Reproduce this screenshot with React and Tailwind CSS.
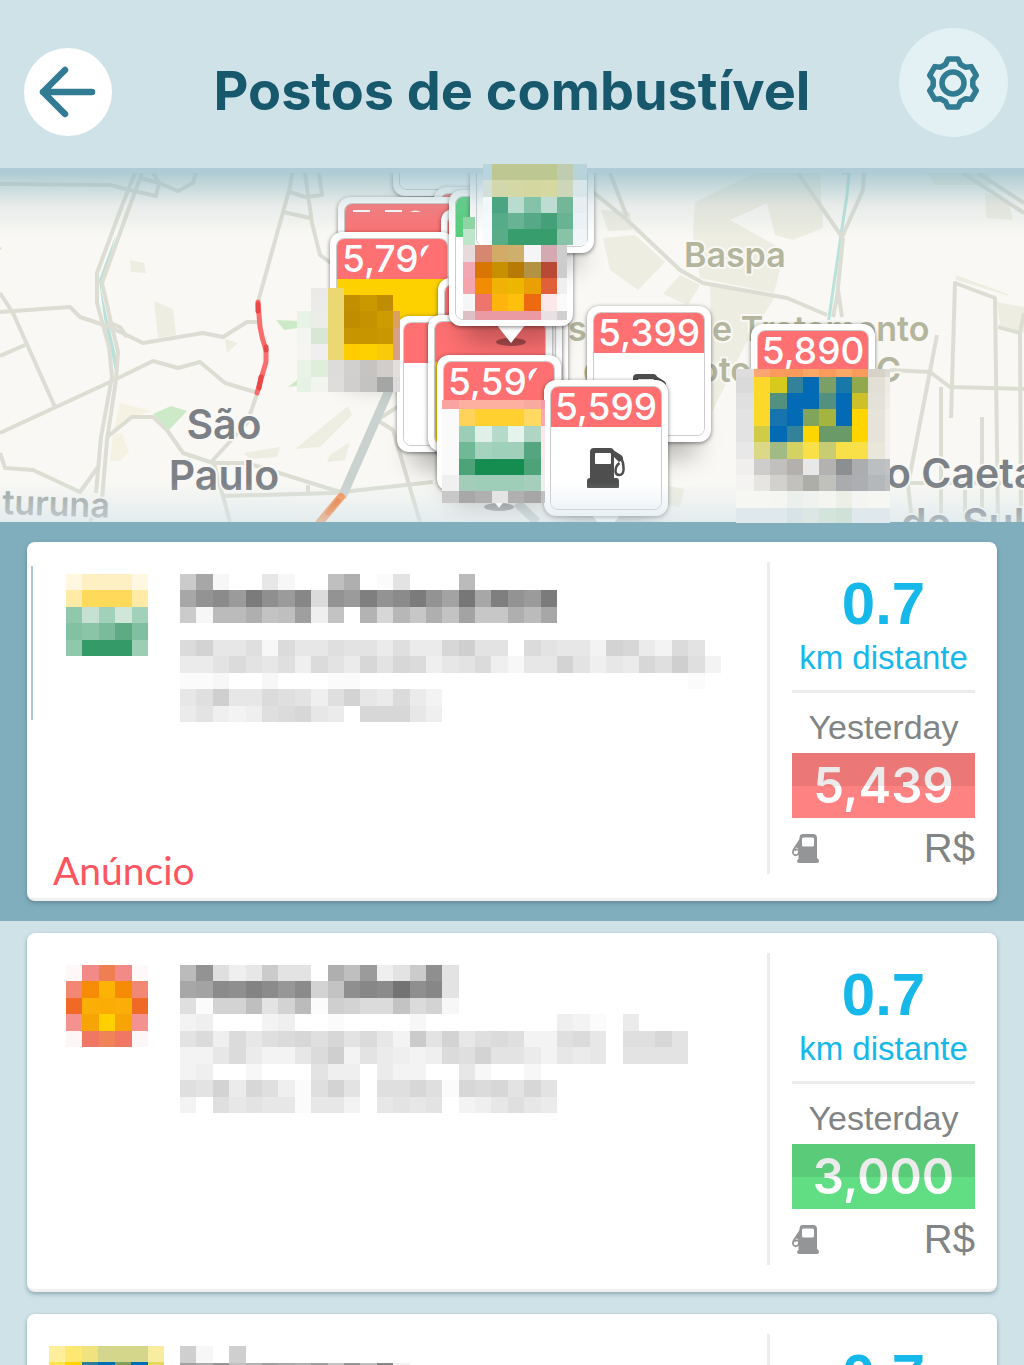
const CELL = 82 / 5;

const stations = [
    {
        id: "first",
        sponsored: true,
        price: "5,439",
        priceClass: "bg-[#ff8282]",
        logo: [
            "fff7df fff0c4 fff0c4 fff0c4 fff7df",
            "ffeaa6 ffd95a ffd95a ffd95a ffeaa6",
            "8fc8ab c6e1d3 a1d1b8 cfe6d9 a1d1b8",
            "82c1a1 8ac5a7 79bb9a 5cab83 80c0a1",
            "8fc8ab 349b68 349b68 349b68 9bceb5",
        ],
        lines: [
            "dm2..62..gk.17...h",
            "mrtpxspu9rpwrtxrnymwrpx",
            "d2hhkfgo4f.jaiekfneekhm",
            "",
            "9b66829668775855ac77.97663ba5397.",
            "55797684975a7a946794266b7465a8c83",
            "112..2...11....................1",
            "68c6698748b65953",
            "5743489a65.aaa64",
        ],
    },
    {
        id: "second",
        price: "3,000",
        priceClass: "bg-[#61dd84]",
        logo: [
            "fef8f8 f28b87 ef7e52 f28b87 fef8f8",
            "f28873 f68c06 fcb305 f68c06 f28873",
            "f06a25 fbae08 fbac05 fbae08 f06a25",
            "f3928e f7a406 ffd000 f7a406 f3928e",
            "fdf6f6 ef7763 f08358 ef7763 fdf6f6",
        ],
        lines: [
            "hr846d77.kgp47ds7",
            "mntsvtqtbfsutzsu7",
            "81bbg7bh1cb99f9b2",
            "34...34..1....2........431.5",
            "7949689a8a7963d7b689833896.88a7",
            "336953369c37543498b7753656.7777",
            "34..2...744.533..62..2",
            "87b5a8418b7.88a81a9a7a7",
            "3.867661663.6767.346865",
        ],
    },
    {
        id: "third",
        price: "5,890",
        priceClass: "bg-[#ff8282]",
        logo: [
            "ffef9c ffe872 f0e27e d4d68c d4d68c d4d68c f8eca0",
            "ffe44a ffd400 2a7f96 006db8 7da05e 006db8 e6d85a",
            "ffd400 4c8c80 006db8 006db8 4c8c80 006db8 e6d85a",
            "ffd400 006db8 33829a ffd400 6a9a68 6a9a68 ffd400",
            "ffef9c ffe872 f0e27e ffe872 d4d68c ffe872 f8eca0",
        ],
        lines: ["c2.c", "nlqgjomkpfqgu3"],
    },
];

const pins = [
    { x: 393, y: 60, head: "bg-white" },
    { x: 434, y: 187 },
    { x: 338, y: 197, dashes: true },
    { x: 441, y: 209 },
    { x: 444, y: 294, body: "bg-[#cda600]" },
    { x: 436, y: 248 },
    { x: 435, y: 260 },
    { x: 330, y: 232, label: "5,79", cut: "9", body: "bg-[#fdd000]" },
    { x: 438, y: 278 },
    { x: 397, y: 316 },
    { x: 428, y: 315, body: "bg-[#f3c900]" },
    { x: 449, y: 190, head: "bg-[#54cf7b]", tail: true },
    { x: 470, y: 117, head: "bg-white" },
    { x: 587, y: 306, label: "5,399", pump: true },
    { x: 751, y: 324, label: "5,890", body: "bg-[#fdd000]" },
    { x: 437, y: 355, label: "5,59", cut: "9", tail: true },
    { x: 544, y: 380, label: "5,599", pump: true, tail: true },
];

const mapBlocks = [
    {
        xs: [297, 311, 328, 344, 360, 377, 393, 400],
        ys: [288, 295, 311, 328, 344, 360, 377, 392],
        rows: [
            "- ebeae8 ecd873 - - - -",
            "- ebebe9 ecd873 c18f00 c99a00 c08d00 -",
            "e6f3e5 ecece9 ecd873 c08d00 c49400 cc9c00 d9a060",
            "f3f5f1 d8e6d6 ecd873 c69500 c69500 c99800 d9a088",
            "f5f5f2 f0eeee ecd873 ffcc00 ffd000 f9ca0a d9a088",
            "e9f3e6 deeedb dedcda d2d0ce c5c4c2 d0cdca e3dedb",
            "e6f2e3 f2f4ef dedddc d0cfcd c3c3c2 a3a6a4 dedcdb",
        ],
    },
    {
        xs: [463, 475, 492, 508, 524, 541, 557, 567],
        ys: [217, 229, 245, 262, 278, 294, 311, 320],
        rows: [
            "8fd4a5 - - - - - -",
            "bfe5cb - - - - - -",
            "e6dada d5886f d3ab66 cfaf6c f5f5f5 d4a9b2 cdcdcd",
            "f2a8b2 d97502 c79000 b67a05 b39343 b84a35 cccccc",
            "f5a3ad f28c05 efb205 edb602 e9a005 e0603a efefef",
            "f6f6f6 ee756c fdb40d ffc00d ee6a10 fbe8ea fafafa",
            "dcc0c6 ea9aa2 ea9aa2 ea9aa2 ea9aa2 e8e0e2 d0d0d0",
        ],
    },
    {
        xs: [483, 492, 508, 524, 541, 557, 573, 587],
        ys: [164, 180, 197, 213, 229, 245],
        rows: [
            "b8d4dc bec792 bdc792 bdc792 bdc792 c0ccaf b9d3da",
            "d2dfd8 d2d8ac d4d8a4 d4d7a0 d6d8a2 cdd6b8 d8e6e9",
            "f2f8fa 4ba582 b8dcd0 85c2aa bcdcd4 74b698 e6eef2",
            "f5f9fb 56ab89 67b394 55a986 43a077 67b393 ebf2f5",
            "f8fbfd 58ac87 389d6d 389d6d 389d6d 88c3a8 f0f5f8",
        ],
    },
    {
        xs: [442, 459, 475, 492, 508, 524, 541, 545],
        ys: [400, 409, 426, 442, 459, 475, 491, 503],
        rows: [
            "f9a3a3 fdb09f fdb09f fdb09f fdb09f faa99f f59ba5",
            "fafafa ffd25a ffd030 ffd030 ffd030 ffd962 f9a8b0",
            "fafafa 9ccdb6 e0f0e8 b5dac9 e4f3eb b0d5c4 fce8ea",
            "fafafa 6fb996 a5d3bd 9fd0b9 a0d0b9 55a680 fce8ea",
            "fafafa 4ca377 158c50 158c50 158c50 4ca377 f3e8ea",
            "f0f0f0 a3cdb9 9fceb8 9fceb8 9fceb8 a5cfbc f0eeee",
            "c8c8c8 a8a8a8 b0b0b0 e4e4e4 b0b0b0 a6a6a6 c0c0c0",
        ],
    },
    {
        xs: [736, 754, 770, 787, 803, 819, 836, 852, 868, 885, 890],
        ys: [369, 377, 393, 409, 426, 442, 459, 475, 491, 508, 523],
        rows: [
            "dedcdc f9a672 fa9a5c f99b5c faa868 f99b5c faa868 f99b5c d6d2c8 dedad8",
            "dadada fcd82a d6ca1c 33829a 036bb5 7c9f65 1878a8 92a84c e2dfd4 ecebe8",
            "e0e0e0 fcd82a 529080 036bb5 036bb5 529080 036bb5 cdc028 e4e2d8 eeedea",
            "e3e3e3 fcd82a 1774ae 036bb5 80a45c a4b43e 036bb5 ffd500 e6e4da f2f1ec",
            "e3e3e3 d0cc48 036bb5 33829a ffd500 6a9a68 6a9a68 ffd500 e6e4da f2f1ee",
            "e8e8e8 dbd988 a2bb84 d3d263 f9df48 c8cd74 f9df48 f9df48 e9e6da f2f1ee",
            "f0efed cfcdcc c2c0bf b4b0ad e8e8e8 b4b2b0 8d8e90 abadaf bbbfc2 c0c2c4",
            "f4f3f1 e6e5e2 d2d1ce c2c1bd aeaea9 c0c0bc aaabae adaeb1 b4b8bb bcbfc2",
            "f6f6f3 f6f6f3 f5f5f2 ebf0ec f0f2ef f4f4f1 ecefe6 f4f4f2 f6f6f3 f6f6f3",
            "dfe8ec dfe8ec dfe8ec d7e3e6 dce6e5 d2e4dc d0e2d8 dfe8ec dfe8ec dfe8ec",
        ],
    },
];

const roads = [
    "M0 184 L110 185 L130 190 L156 196 L159 183 L140 178",
    "M153 173 L159 183 L178 191 L193 183 L196 173",
    "M135 173 L123 203 L97 273 L97 303 L109 347 L112 377 L101 437 L96 493",
    "M142 173 L129 208 L102 283 L112 327 L118 352 L116 380 L107 440 L102 500 L90 522",
    "M0 312 L70 307 L80 317 L110 327 L143 343 L203 333 L223 337 L247 322 L258 322",
    "M108 322 L120 327 L127 337",
    "M0 293 L13 313 L55 407",
    "M0 356 L25 345",
    "M0 433 L110 382 L153 361 L178 368 L200 362 L225 383 L255 392",
    "M107 437 L132 417 L153 417 L167 430 L183 453 L213 463 L247 463 L340 492",
    "M0 453 L5 468 L33 470 L80 492 L98 467",
    "M292 173 L290 187 L258 302",
    "M257 394 L247 423 L213 460 L230 522",
    "M305 173 L312 223 L320 255 L335 266",
    "M319 173 L322 195 L305 197 L290 192",
    "M283 212 L310 218",
    "M223 496 L333 493 L433 482",
    "M308 485 V493",
    "M377 420 L393 430 L420 522 M377 420 L440 380",
    "M610 173 L627 217",
    "M593 192 L627 220 L680 270 L703 283 L787 298 L827 315",
    "M798 173 L842 237 L863 190 L864 173",
    "M843 238 L837 297 L833 317 M838 290 L842 317",
    "M963 173 L1024 213 M978 173 L1024 203",
    "M951 418 L955 283 L995 298 L998 522",
    "M998 327 L1020 333 L1024 313 M1020 333 L1021 522",
    "M890 370 L930 372 L950 387 L1024 389",
    "M937 335 L908 485 L912 522",
    "M941 387 V522 M982 417 V522 M965 490 V522",
    "M908 483 H1024",
];

// Text blocks are stored as one base-36 character per cell, "." being blank
function greyOf(char) {
    const level = 255 - parseInt(char, 36) * 4;
    return `rgb(${level},${level},${level})`;
}

function PixelLogo({ rows }) {
    const cells = rows.map((row) => row.split(" "));
    const cols = cells[0].length;
    return (
        <svg
            width={Math.round(cols * CELL)}
            height={Math.round(rows.length * CELL)}
            viewBox={`0 0 ${cols} ${rows.length}`}
            preserveAspectRatio="none"
            shapeRendering="crispEdges"
            className="shrink-0"
            aria-hidden="true"
        >
            {cells.map((row, r) =>
                row.map((color, c) => (
                    <rect key={`${r}-${c}`} x={c} y={r} width="1" height="1" fill={`#${color}`} />
                ))
            )}
        </svg>
    );
}

function PixelText({ lines }) {
    return (
        <svg
            width="541"
            height={Math.round(lines.length * CELL)}
            viewBox={`0 0 33 ${lines.length}`}
            preserveAspectRatio="none"
            shapeRendering="crispEdges"
            className="shrink-0"
            aria-hidden="true"
        >
            {lines.map((line, r) =>
                [...line].map((char, c) =>
                    char === "." ? null : (
                        <rect key={`${r}-${c}`} x={c} y={r} width="1" height="1" fill={greyOf(char)} />
                    )
                )
            )}
        </svg>
    );
}

function MapBlock({ xs, ys, rows }) {
    return rows.map((row, r) =>
        row.split(" ").map((color, c) =>
            color === "-" ? null : (
                <rect
                    key={`${r}-${c}`}
                    x={xs[c]}
                    y={ys[r]}
                    width={xs[c + 1] - xs[c]}
                    height={ys[r + 1] - ys[r]}
                    fill={`#${color}`}
                />
            )
        )
    );
}

function FuelPump({ className }) {
    return (
        <svg viewBox="0 0 38 40" className={className} aria-hidden="true">
            <path
                fill="currentColor"
                fillRule="evenodd"
                d="M7 0h16q4 0 4 4v26h2q3 0 3 3v6q0 1-1 1H1q-1 0-1-1v-6q0-3 3-3V4q0-4 4-4zM9 5q-1 0-1 1v9q0 1 1 1h14q1 0 1-1V6q0-1-1-1z"
            />
            <path fill="currentColor" d="M26 2l8 5q2 1 2 5l-4 2-6-6z" />
            <path
                fill="none"
                stroke="currentColor"
                strokeWidth="2.5"
                d="M34 9q3 7 2.500 13q-.5 5-4 5q-4 0-4-4q0-5 4-8"
            />
        </svg>
    );
}

function SmallPump() {
    return (
        <svg viewBox="0 0 27 29" className="h-[29px] w-[27px] text-[#939597]" aria-hidden="true">
            <path
                fill="currentColor"
                fillRule="evenodd"
                d="M11 0h10q4 0 4 4v20q2 1 2 3 0 2-2 2H7q-2 0-2-2 0-1 1.500-2V11L7.500 4q0-4 3.500-4zM11.500 3.500q-1.500 0-1.500 1.500v6q0 1.500 1.500 1.500h9q1.500 0 1.500-1.500V5q0-1.500-1.500-1.500z"
            />
            <path
                fill="none"
                stroke="currentColor"
                strokeWidth="1.8"
                d="M8 6L2 15q-1.500 2.500-.8 4.500.8 2 3 1.700 2-.2 2.500-2.200l.3-3q-2.500-1.500-4.500.5"
            />
            <path fill="currentColor" d="M8.500 4L3.500 13l3.500 2z" />
        </svg>
    );
}

function GearIcon() {
    const points = [0, 60, 120, 180, 240, 300].flatMap((turn) =>
        [
            [-22, 20],
            [-12, 24.5],
            [12, 24.5],
            [22, 20],
        ].map(([angle, radius]) => {
            const rad = ((turn + angle) * Math.PI) / 180;
            return `${(radius * Math.sin(rad)).toFixed(2)},${(-radius * Math.cos(rad)).toFixed(2)}`;
        })
    );
    return (
        <svg viewBox="-30 -30 60 60" className="size-15" fill="none" stroke="#317b93" aria-hidden="true">
            <polygon points={points.join(" ")} strokeWidth="5.500" strokeLinejoin="round" />
            <circle r="11" strokeWidth="5.500" />
        </svg>
    );
}

function Header() {
    return (
        <header className="flex shrink-0 items-start justify-between border-b-5 border-[#afccd6] bg-[#cee2e8] px-4 pt-7 pb-[31px]">
            <div className="w-[109px] pt-5 pl-2">
                <button
                    type="button"
                    aria-label="Voltar"
                    className="flex size-[88px] items-center justify-center rounded-full bg-white"
                >
                    <svg viewBox="0 0 60 52" className="h-[52px] w-[60px]" fill="none" aria-hidden="true">
                        <path
                            d="M27 4L5 26l22 22M5 26h49"
                            stroke="#317b93"
                            strokeWidth="6.500"
                            strokeLinecap="round"
                            strokeLinejoin="round"
                        />
                    </svg>
                </button>
            </div>
            <h1 className="pt-[31px] font-[Inter,sans-serif] text-[54px] leading-[64px] font-bold whitespace-nowrap text-[#17586d]">
                Postos de combustível
            </h1>
            <button
                type="button"
                aria-label="Configurações"
                className="flex size-[109px] items-center justify-center rounded-full bg-[#e3f0f4]"
            >
                <GearIcon />
            </button>
        </header>
    );
}

function MapBase() {
    return (
        <svg
            viewBox="0 173 1024 349"
            preserveAspectRatio="xMinYMin slice"
            className="absolute inset-0 h-full w-full"
            role="img"
            aria-label="Mapa"
        >
            <g fill="#eeede1">
                <path d="M695 202L755 173H820L823 228L793 240L775 235L767 203L730 220L780 248L782 262L774 293L700 278L693 235z" />
                <path d="M603 238L635 235L665 262L638 290L610 270zM680 275L700 285L688 305L663 294zM601 210L630 212L632 230L608 231z" />
                <path d="M710 285L775 297L745 345L712 412z" />
                <path d="M130 260L144 263L146 273L131 272zM154 301L173 309L176 335L158 338zM225 339L238 343L227 353z" />
                <path d="M244 453L280 447L277 457L250 459zM295 449L348 406L352 415L320 447zM330 455L350 442L345 460L327 462z" />
                <path d="M985 193L1008 200L1013 220L986 218zM927 173H990V185H935zM956 275L1010 295L1006 295L956 280zM997 302L1024 307V333L1000 325zM669 486L684 489L680 507L667 505z" />
            </g>
            <path d="M120 403L153 411L132 417L112 437zM113 435L122 433L129 452L120 461L110 461z" fill="#f6f2e3" />
            <path d="M153 414L171 406L187 411L169 430zM276 320L284 330L298 328V321zM288 387L297 380V386zM0 247L2 248L0 250z" fill="#cdeac8" />
            <path d="M116 234L99 280L104 318L115 371L117 360L110 330L101 290z" fill="#b9e0da" />
            <path d="M842 173H849L847 195L841 235L828 325" fill="none" stroke="#b9e2db" strokeWidth="3" />
            <g fill="none" stroke="#dcded3" strokeWidth="4" strokeLinejoin="round">
                {roads.map((d) => (
                    <path key={d} d={d} />
                ))}
            </g>
            <path d="M390 388L342 497M517 503L537 522" fill="none" stroke="#cad2cf" strokeWidth="9" />
            <path d="M341 497L320 522" stroke="#f88b4c" strokeWidth="8" strokeLinecap="round" />
            <path d="M338 501L328 513" stroke="#f36f22" strokeWidth="5" strokeLinecap="round" />
            <path
                d="M258 302L260 327Q262 339 266 350V362L257 393"
                fill="none"
                stroke="#fb6d6d"
                strokeWidth="5"
                strokeLinecap="round"
            />
            <path d="M258 304V311M266 347V350M261 377L259 388" stroke="#e94848" strokeWidth="5" strokeLinecap="round" />
            <g
                className="font-[Inter,sans-serif] font-semibold"
                stroke="#f9f8f4"
                strokeWidth="4"
                strokeLinejoin="round"
                paintOrder="stroke"
            >
                <g fill="#7b8187" fontSize="41">
                    <text x="224" y="439" textAnchor="middle">São</text>
                    <text x="224" y="490" textAnchor="middle">Paulo</text>
                    <text x="886" y="488">o Caetano</text>
                    <text x="901" y="538">do Sul</text>
                </g>
                <g fill="#b3b69d" fontSize="34">
                    <text x="684" y="267">Baspa</text>
                    <text x="568" y="341">s</text>
                    <text x="712" y="341">e Tratamento</text>
                    <text x="583" y="382">de</text>
                    <text x="698" y="382">otos</text>
                    <text x="876" y="382">C</text>
                </g>
                <text x="2" y="514" fontSize="34" fill="#a0a5a3" transform="rotate(2 2 514)">turuna</text>
            </g>
        </svg>
    );
}

function Pin({ x, y, label, cut, head = "bg-[#fe7071]", body = "bg-white", pump, tail, dashes }) {
    return (
        <div className="absolute h-34 w-31" style={{ left: x, top: y - 173 }}>
            <div className="absolute inset-x-3 -bottom-4 h-8 rounded-full bg-black/25 blur-md"></div>
            {tail && (
                <svg viewBox="0 0 40 24" className="absolute top-full left-1/2 -mt-1 h-6 w-10 -translate-x-1/2" aria-hidden="true">
                    <ellipse cx="20" cy="20" rx="15" ry="4" fill="#000" fillOpacity=".35" />
                    <path d="M5 2H35L20 21z" fill="#fff" />
                </svg>
            )}
            <div className="relative flex h-full flex-col rounded-xl bg-white p-1.5 shadow-[0_1px_4px_rgba(0,0,0,0.5)]">
                <div className="flex flex-1 flex-col overflow-hidden rounded-lg border border-black/20">
                    <div
                        className={`flex h-10 items-center justify-center font-[Inter,sans-serif] text-[37px] leading-10 font-medium text-white ${head}`}
                    >
                        {label}
                        {cut && <span className="inline-block [clip-path:polygon(0_0,60%_0,0_60%)]">{cut}</span>}
                        {dashes && (
                            <svg viewBox="0 0 110 40" className="h-10 w-full" fill="#fff" aria-hidden="true">
                                <path d="M8 6h17v2H8zM40 6h17v2H40zM65 8q5-3 11 0z" />
                            </svg>
                        )}
                    </div>
                    <div className={`flex flex-1 items-center justify-center ${body}`}>
                        {pump && <FuelPump className="h-10 w-[38px] text-[#4e4e4e]" />}
                    </div>
                </div>
            </div>
        </div>
    );
}

function StationMap() {
    return (
        <section className="relative h-[349px] shrink-0 bg-[#f9f8f4]">
            <div className="absolute inset-0 overflow-hidden">
                <MapBase />
                {pins.map((pin) => (
                    <Pin key={`${pin.x}-${pin.y}`} {...pin} />
                ))}
                {/* Soft fade under the header and above the list */}
                <div className="absolute inset-x-0 top-0 h-16 bg-gradient-to-b from-[#8fb9c5]/70 via-[#9fb9c0]/20 to-transparent"></div>
                <div className="absolute inset-x-0 bottom-0 h-10 bg-gradient-to-t from-[#d5e4ea]/60 to-transparent"></div>
            </div>
            <svg
                viewBox="0 173 1024 349"
                preserveAspectRatio="xMinYMin slice"
                shapeRendering="crispEdges"
                className="absolute inset-0 h-full w-full overflow-visible"
                aria-hidden="true"
            >
                {mapBlocks.map((block) => (
                    <MapBlock key={block.xs[0]} {...block} />
                ))}
            </svg>
        </section>
    );
}

function StationCard({ station }) {
    return (
        <article className="relative flex rounded-lg border-b-3 border-[#f0f0f0] bg-white pr-[22px] pl-1.5 shadow-[0_2px_4px_rgba(60,90,100,0.45)]">
            {station.sponsored && <span className="absolute top-6 left-1 h-[154px] w-0.5 bg-[#a9c8d3]"></span>}
            <div className="flex min-w-0 flex-1 flex-col justify-between overflow-hidden pt-8 pb-2">
                <div className="flex">
                    <div className="flex w-[147px] shrink-0 justify-center">
                        <PixelLogo rows={station.logo} />
                    </div>
                    <PixelText lines={station.lines} />
                </div>
                {station.sponsored && (
                    <p className="pl-5 font-[Lato,sans-serif] text-[39px] leading-10 text-[#fd5560]">Anúncio</p>
                )}
            </div>
            <div className="mt-5 mb-6 flex flex-col border-l-3 border-[#ececec] pl-[22px] font-['Liberation_Sans',sans-serif]">
                <div className="flex w-[183px] flex-col border-b-3 border-[#ececec] pb-2.5 text-center text-[#16b8ea]">
                    <span className="pt-2.5 text-[60px] leading-[64px] font-bold">0.7</span>
                    <span className="text-[33px] leading-11 whitespace-nowrap">km distante</span>
                </div>
                <span className="pt-2 text-center text-[34px] leading-13 text-[#808484]">Yesterday</span>
                <div
                    className={`relative flex h-[65px] items-center justify-center font-[Inter,sans-serif] text-[49px] font-semibold text-white ${station.priceClass}`}
                >
                    {station.price}
                    <div className="absolute inset-x-0 top-0 h-1/2 bg-black/8"></div>
                </div>
                <div className="flex items-center justify-between pt-2 pb-1 text-[#808484]">
                    <SmallPump />
                    <span className="text-[40px] leading-11">R$</span>
                </div>
            </div>
        </article>
    );
}

export default function App() {
    const [sponsored, ...others] = stations;
    return (
        <div className="flex h-screen flex-col overflow-hidden bg-[#cee2e8]">
            <Header />
            <main className="flex min-h-0 flex-1 flex-col">
                <StationMap />
                <div className="min-h-0 flex-1 overflow-y-auto [scrollbar-width:none]">
                    <div className="bg-[#81aebd] px-[27px] py-5">
                        <StationCard station={sponsored} />
                    </div>
                    <div className="flex flex-col gap-[22px] px-[27px] py-3">
                        {others.map((station) => (
                            <StationCard key={station.id} station={station} />
                        ))}
                    </div>
                </div>
            </main>
        </div>
    );
}
